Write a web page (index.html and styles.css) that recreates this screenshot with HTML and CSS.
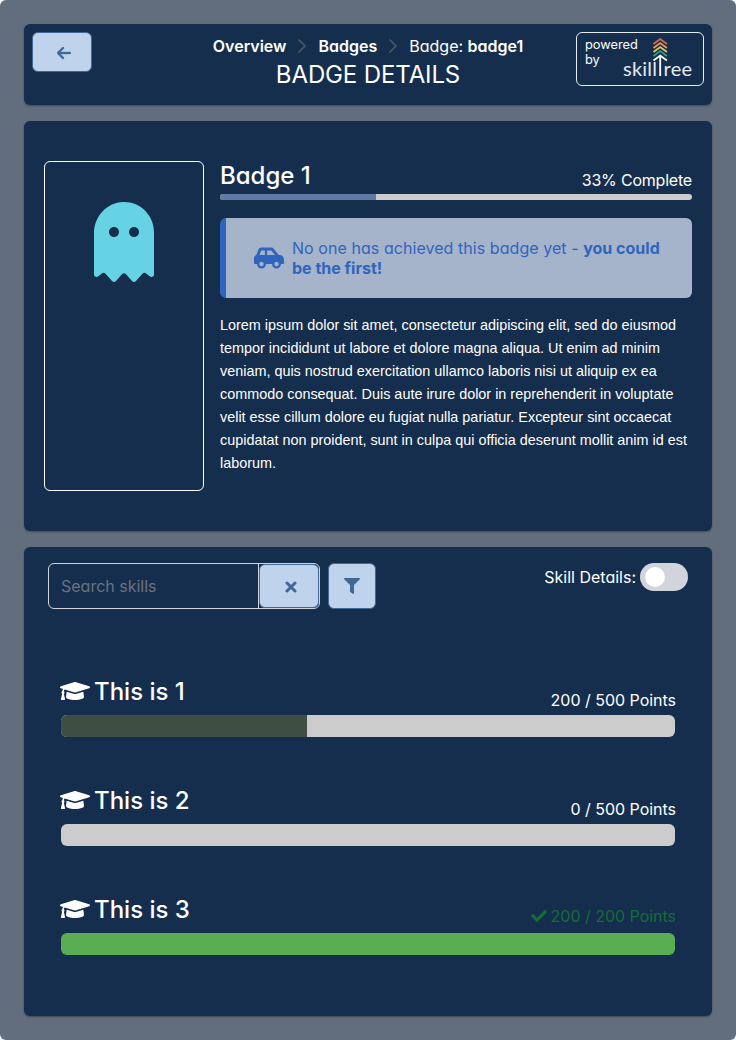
FILE: index.html
```html
<!DOCTYPE html>
<html lang="en">
<head>
<meta charset="utf-8">
<title>Badge Details</title>
<link rel="stylesheet" href="styles.css">
</head>
<body>
<svg class="defs" aria-hidden="true">
  <symbol id="cap" viewBox="0 0 640 512"><path d="M622.34 153.2L343.4 67.5c-15.2-4.67-31.6-4.67-46.79 0L17.66 153.2c-23.54 7.23-23.54 38.36 0 45.59l48.63 14.94c-10.67 13.19-17.23 29.28-17.88 46.9C38.78 266.15 32 276.11 32 288c0 10.78 5.68 19.85 13.86 25.65L20.33 428.53C18.11 438.52 25.71 448 35.94 448h56.11c10.24 0 17.84-9.48 15.62-19.47L82.14 313.65C90.32 307.85 96 298.78 96 288c0-11.57-6.47-21.25-15.66-26.87.76-15.02 8.44-28.3 20.69-36.72L296.6 284.5c9.06 2.78 26.44 6.25 46.79 0l278.95-85.7c23.55-7.24 23.55-38.36 0-45.6zM352.79 315.09c-28.53 8.76-52.84 3.92-65.59 0l-145.02-44.55L128 384c0 35.35 85.96 64 192 64s192-28.65 192-64l-14.18-113.47-145.03 44.56z"/></symbol>
</svg>
<div class="app">
  <header class="card header">
    <button class="btn back" aria-label="Back"><svg width="14" height="16" viewBox="0 0 448 512"><path d="M9.4 233.4c-12.5 12.5-12.5 32.8 0 45.3l160 160c12.5 12.5 32.8 12.5 45.3 0s12.5-32.8 0-45.3L109.2 288 416 288c17.7 0 32-14.3 32-32s-14.3-32-32-32l-306.7 0L214.6 118.6c12.5-12.5 12.5-32.8 0-45.3s-32.8-12.5-45.3 0l-160 160z"/></svg></button>
    <div class="heading">
      <nav class="crumbs">
        <b>Overview</b>
        <svg width="8" height="14" viewBox="0 0 8 14"><path d="M.5 .5L7 7 .5 13.500"/></svg>
        <b>Badges</b>
        <svg width="8" height="14" viewBox="0 0 8 14"><path d="M.5 .5L7 7 .5 13.500"/></svg>
        <span>Badge: <b>badge1</b></span>
      </nav>
      <h1>BADGE DETAILS</h1>
    </div>
    <div class="powered">
      <div class="powered-text"><div>powered</div><div class="by">by</div></div>
      <svg class="logo" width="72" height="42" viewBox="0 0 72 42">
        <g fill="none" stroke-width="1.8">
          <path stroke="#dd6650" d="M30.500 6l6.700-5 6.700 5"/>
          <path stroke="#ea9950" d="M30.500 10l6.700-5 6.700 5"/>
          <path stroke="#e6c45c" d="M30.500 14l6.700-5 6.700 5"/>
          <path stroke="#2a9d8f" d="M30.500 18l6.700-5 6.700 5"/>
          <path stroke="#fff" d="M30.500 22.500l6.700-5 6.700 5M37.200 18v20"/>
        </g>
        <text x="0" y="37.500" textLength="34">skill</text>
        <text x="40.500" y="37.500" textLength="28.500">ree</text>
      </svg>
    </div>
  </header>

  <section class="card badge">
    <div class="badge-icon"><svg width="60" height="80" viewBox="0 0 384 512"><path d="M186.1.09C81.01 3.24 0 94.92 0 200.05v263.92c0 14.26 17.23 21.39 27.31 11.31l24.92-18.53c6.66-4.95 16-3.99 21.51 2.21l42.95 48.35c6.25 6.25 16.38 6.25 22.63 0l40.72-45.85c6.37-7.17 17.56-7.17 23.92 0l40.72 45.85c6.25 6.25 16.38 6.25 22.63 0l42.95-48.35c5.51-6.2 14.85-7.17 21.51-2.21l24.92 18.53c10.08 10.08 27.31 2.94 27.31-11.31V192C384 84 294.83-3.17 186.1.09zM128 224c-17.67 0-32-14.33-32-32s14.33-32 32-32 32 14.33 32 32-14.33 32-32 32zm128 0c-17.67 0-32-14.33-32-32s14.33-32 32-32 32 14.33 32 32-14.33 32-32 32z"/></svg></div>
    <div class="badge-body">
      <div class="row"><h2>Badge 1</h2><span class="complete">33% Complete</span></div>
      <div class="meter slim"><div class="fill blue" style="width:33%"></div></div>
      <div class="notice">
        <svg width="30" height="24" viewBox="0 0 640 512"><path d="M544 192h-16L419.22 56.02A64.025 64.025 0 0 0 369.24 32H155.33c-26.17 0-49.7 15.93-59.42 40.23L48 194.26C20.44 201.4 0 226.21 0 256v112c0 8.84 7.16 16 16 16h48c0 53.02 42.98 96 96 96s96-42.98 96-96h128c0 53.02 42.98 96 96 96s96-42.98 96-96h48c8.84 0 16-7.16 16-16v-80c0-53.02-42.98-96-96-96zM160 432c-26.47 0-48-21.53-48-48s21.53-48 48-48 48 21.53 48 48-21.53 48-48 48zm72-240H116.93l38.4-96H232v96zm48 0V96h89.24l76.8 96H280zm200 240c-26.47 0-48-21.53-48-48s21.53-48 48-48 48 21.53 48 48-21.53 48-48 48z"/></svg>
        <div><span class="lead">No one has achieved this badge yet - </span><b>you could<br>be the first!</b></div>
      </div>
      <p class="desc">Lorem ipsum dolor sit amet, consectetur adipiscing elit, sed do eiusmod tempor incididunt ut labore et dolore magna aliqua. Ut enim ad minim veniam, quis nostrud exercitation ullamco laboris nisi ut aliquip ex ea commodo consequat. Duis aute irure dolor in reprehenderit in voluptate velit esse cillum dolore eu fugiat nulla pariatur. Excepteur sint occaecat cupidatat non proident, sunt in culpa qui officia deserunt mollit anim id est laborum.</p>
    </div>
  </section>

  <section class="card skills">
    <div class="toolbar">
      <div class="search">
        <input type="text" placeholder="Search skills">
        <button class="btn clear" aria-label="Clear"><svg width="12" height="12" viewBox="0 0 12 12"><path class="cross" d="M2 2l8 8M10 2l-8 8"/></svg></button>
      </div>
      <button class="btn filter" aria-label="Filter"><svg width="16" height="16" viewBox="0 0 512 512"><path d="M487.976 0H24.028C2.71 0-8.047 25.866 7.058 40.971L192 225.941V432c0 7.831 3.821 15.17 10.237 19.662l80 55.98C298.02 518.69 320 507.493 320 487.98V225.941l184.947-184.97C520.021 25.896 509.338 0 487.976 0z"/></svg></button>
      <div class="details"><span>Skill Details:</span><span class="switch"><span class="knob"></span></span></div>
    </div>
    <div class="list">
      <article class="skill">
        <div class="row"><h3><svg width="30" height="24"><use href="#cap"/></svg>This is 1</h3><span class="points">200 / 500 Points</span></div>
        <div class="meter"><div class="fill olive" style="width:40%"></div></div>
      </article>
      <article class="skill">
        <div class="row"><h3><svg width="30" height="24"><use href="#cap"/></svg>This is 2</h3><span class="points">0 / 500 Points</span></div>
        <div class="meter"></div>
      </article>
      <article class="skill">
        <div class="row"><h3><svg width="30" height="24"><use href="#cap"/></svg>This is 3</h3><span class="points done"><svg width="16" height="16" viewBox="0 0 512 512"><path d="M173.898 439.404l-166.4-166.4c-9.997-9.997-9.997-26.206 0-36.204l36.203-36.204c9.997-9.998 26.207-9.998 36.204 0L192 312.690 432.095 72.596c9.997-9.997 26.207-9.997 36.204 0l36.203 36.204c9.997 9.997 9.997 26.206 0 36.204l-294.400 294.401c-9.998 9.997-26.207 9.997-36.204-.001z"/></svg>200 / 200 Points</span></div>
        <div class="meter"><div class="fill green" style="width:100%"></div></div>
      </article>
    </div>
  </section>
</div>
</body>
</html>
```
FILE: styles.css
```css
* { box-sizing: border-box; }
body { margin: 0; background: #fff; color: #fff; font: 16px/24px Inter, "Liberation Sans", sans-serif; font-feature-settings: "cv02", "cv03", "cv04", "cv11"; }
svg { fill: currentColor; flex: none; display: block; }
b { font-weight: 700; }
h1, h2, h3, p { margin: 0; }
.defs { display: none; }
.app { height: 1040px; padding: 24px; background: #626d7d; border-radius: 6px; display: flex; flex-direction: column; gap: 16px; }
.card { background: #162e4d; border-radius: 6px; box-shadow: 0 1px 2px rgba(0,0,0,.35); }
.btn { display: flex; align-items: center; justify-content: center; background: #bfd4ec; border: 1px solid #3f6895; border-radius: 6px; color: #3f6895; padding: 0; }

.header { height: 81px; padding: 8px; display: grid; grid-template-columns: 128px 1fr 128px; align-items: start; }
.back { width: 60px; height: 40px; padding: 1px 0 0 4px; }
.back svg { stroke: currentColor; stroke-width: 12; }
.heading { text-align: center; padding-top: 2px; }
.crumbs { display: flex; justify-content: center; align-items: center; gap: 12px; white-space: nowrap; }
.crumbs b { font-weight: 600; }
.crumbs svg { fill: none; stroke: #4b5563; stroke-width: 1.7; }
h1 { margin-top: 1px; font-size: 24px; line-height: 32px; font-weight: 400; letter-spacing: -.12px; }
.powered { height: 54px; border: 1px solid #e8edf3; border-radius: 6px; padding: 4px 0 0 8px; display: flex; }
.powered-text { width: 38px; font-size: 12.8px; line-height: 15px; font-feature-settings: normal; }
.by { width: 20px; }
.logo { overflow: visible; margin-top: 1px; }
.logo text { font: 400 20px Lato, sans-serif; fill: #e4e9ef; }

.badge { height: 410px; padding: 40px 20px; display: flex; gap: 16px; }
.badge-icon { width: 160px; height: 330px; border: 1px solid #fff; border-radius: 6px; display: flex; justify-content: center; padding-top: 40px; color: #65d3e4; }
.badge-body { flex: 1; }
.row { display: flex; justify-content: space-between; }
h2, h3 { font-size: 24px; font-weight: 500; line-height: 30px; }
.badge-body .row { height: 33px; }
.complete { padding-top: 7px; letter-spacing: -.2px; }
.meter { height: 22px; background: #ccc; border-radius: 6px; overflow: hidden; }
.slim { height: 6px; border-radius: 3px; }
.fill { height: 100%; }
.blue { background: #6079a5; }
.olive { background: #3e4e43; }
.green { background: #59ad52; }
.notice { margin-top: 18px; height: 80px; background: #a5b4cb; border-left: 6px solid #2f65bd; border-radius: 6px; color: #2f65bd; padding: 0 28px; display: flex; align-items: center; gap: 8px; line-height: 20px; }
.lead { letter-spacing: .06px; }
.desc { margin-top: 16px; font: 14.4px/23px "Liberation Sans", sans-serif; }

.skills { height: 469px; padding: 16px 24px; }
.toolbar { display: flex; gap: 8px; height: 46px; }
.search { width: 272px; border: 1px solid #d1d5db; border-radius: 6px; display: flex; }
input { width: 210px; border: 0; border-right: 1px solid #d1d5db; background: none; padding: 0 12px; font: inherit; outline: 0; }
input::placeholder { color: #6b7280; opacity: 1; }
.clear { flex: 1; padding: 1px 0 0 4px; }
.cross { stroke: currentColor; stroke-width: 3; stroke-linecap: round; }
.filter { width: 48px; }
.details { margin-left: auto; display: flex; gap: 4px; height: 28px; line-height: 28px; }
.switch { width: 48px; height: 28px; border-radius: 14px; background: #d1d5db; padding: 4px 5px; }
.knob { display: block; width: 20px; height: 20px; border-radius: 50%; background: #fff; }
.list { padding: 68px 12px 0; display: flex; flex-direction: column; gap: 49px; }
.skill { height: 60px; }
.skill .row { height: 38px; }
.skill .meter { margin: 0 1px; }
h3 { display: flex; gap: 4px; }
h3 svg { margin-top: 2px; }
.points { padding-top: 11px; display: flex; letter-spacing: -.02px; }
.done { color: #146c37; gap: 4px; padding-top: 9px; }
.done svg { margin-top: 4px; }
```
